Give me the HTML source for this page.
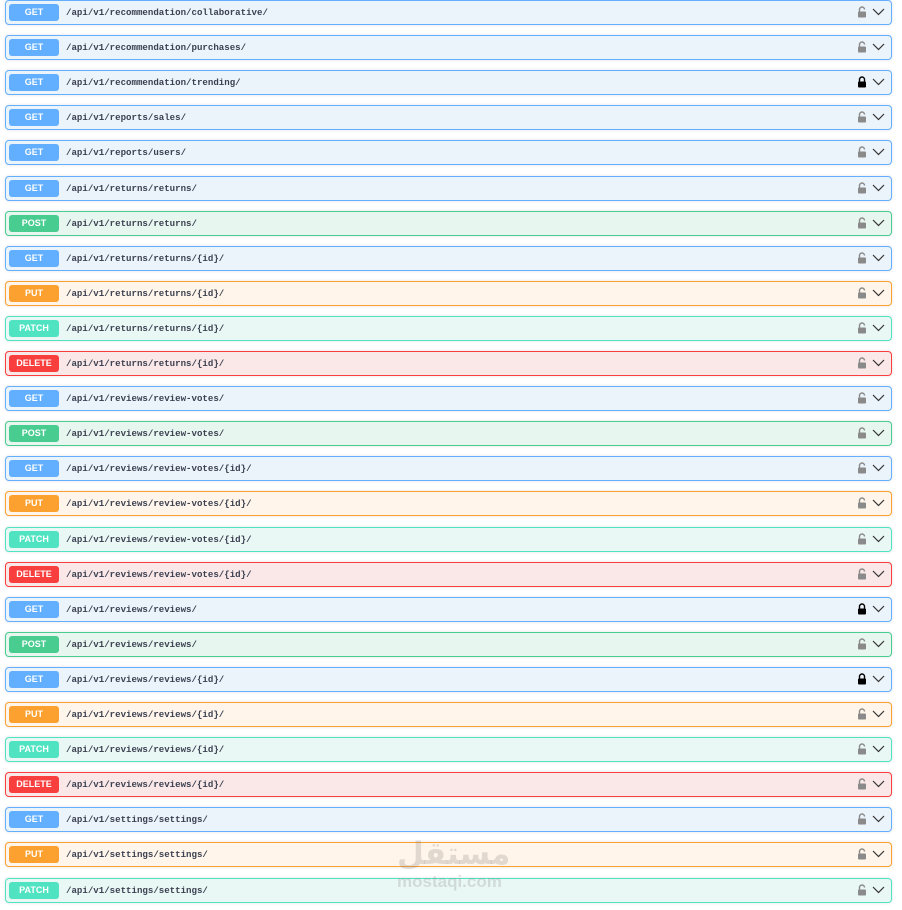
<!DOCTYPE html>
<html><head><meta charset="utf-8"><style>
body{margin:0;background:#fff;width:902px;height:910px;overflow:hidden;position:relative;font-family:"Liberation Sans",sans-serif}
.r{position:absolute;left:5px;width:885px;height:23px;border:1px solid;border-radius:4px;box-shadow:0 0 3px rgba(0,0,0,.12)}
.b{position:absolute;left:3px;top:3px;width:50px;height:17px;border-radius:3px;color:#fff;font-weight:bold;font-size:9px;line-height:17px;text-align:center}
.p{position:absolute;left:60px;top:0;line-height:24px;font-family:"Liberation Mono",monospace;font-weight:bold;font-size:9.1px;color:#3b4151}
.l{position:absolute;left:851px;top:5px}
.c{position:absolute;left:866px;top:6px}
.GET{background:#ebf3fb;border-color:#61affe}.GET .b{background:#61affe}
.POST{background:#e8f6f0;border-color:#49cc90}.POST .b{background:#49cc90}
.PUT{background:#fff5ea;border-color:#fca130}.PUT .b{background:#fca130}
.PATCH{background:#e9f8f5;border-color:#50e3c2}.PATCH .b{background:#50e3c2}
.DELETE{background:#fae7e7;border-color:#f93e3e}.DELETE .b{background:#f93e3e}
.wm{position:absolute;left:396px;color:rgba(120,120,120,.22);font-weight:bold}
</style></head><body>
<div id="list"></div>
<script>
var d=[["GET","/api/v1/recommendation/collaborative/",0],["GET","/api/v1/recommendation/purchases/",0],["GET","/api/v1/recommendation/trending/",1],["GET","/api/v1/reports/sales/",0],["GET","/api/v1/reports/users/",0],["GET","/api/v1/returns/returns/",0],["POST","/api/v1/returns/returns/",0],["GET","/api/v1/returns/returns/{id}/",0],["PUT","/api/v1/returns/returns/{id}/",0],["PATCH","/api/v1/returns/returns/{id}/",0],["DELETE","/api/v1/returns/returns/{id}/",0],["GET","/api/v1/reviews/review-votes/",0],["POST","/api/v1/reviews/review-votes/",0],["GET","/api/v1/reviews/review-votes/{id}/",0],["PUT","/api/v1/reviews/review-votes/{id}/",0],["PATCH","/api/v1/reviews/review-votes/{id}/",0],["DELETE","/api/v1/reviews/review-votes/{id}/",0],["GET","/api/v1/reviews/reviews/",1],["POST","/api/v1/reviews/reviews/",0],["GET","/api/v1/reviews/reviews/{id}/",1],["PUT","/api/v1/reviews/reviews/{id}/",0],["PATCH","/api/v1/reviews/reviews/{id}/",0],["DELETE","/api/v1/reviews/reviews/{id}/",0],["GET","/api/v1/settings/settings/",0],["PUT","/api/v1/settings/settings/",0],["PATCH","/api/v1/settings/settings/",0]];
var h="";
d.forEach(function(x,i){var col=x[2]?"#000":"#8a8a8a";
h+='<div class="r '+x[0]+'" style="top:'+Math.round(35.1*i)+'px"><div class="b">'+x[0]+'</div><div class="p">'+x[1]+'</div>'+
'<svg class="l" width="10" height="12" viewBox="0 0 10 12"><path d="M2.5 5.5V3.5a2.5 2.5 0 0 1 5 0'+(x[2]?'V5.5':'')+'" fill="none" stroke="'+col+'" stroke-width="1.4"/><rect x="1" y="5.5" width="8" height="6" rx="1" fill="'+col+'"/></svg>'+
'<svg class="c" width="13" height="9" viewBox="0 0 13 9"><path d="M1 2l5.5 5.5L12 2" fill="none" stroke="#333" stroke-width="1.2"/></svg></div>';});
document.getElementById("list").innerHTML=h;
</script>
<div class="wm" style="top:836px;font-family:'DejaVu Sans',sans-serif;font-size:31px;left:397px">مستقل</div>
<div class="wm" style="top:872px;font-size:17px;left:397px">mostaqi.com</div>
</body></html>
